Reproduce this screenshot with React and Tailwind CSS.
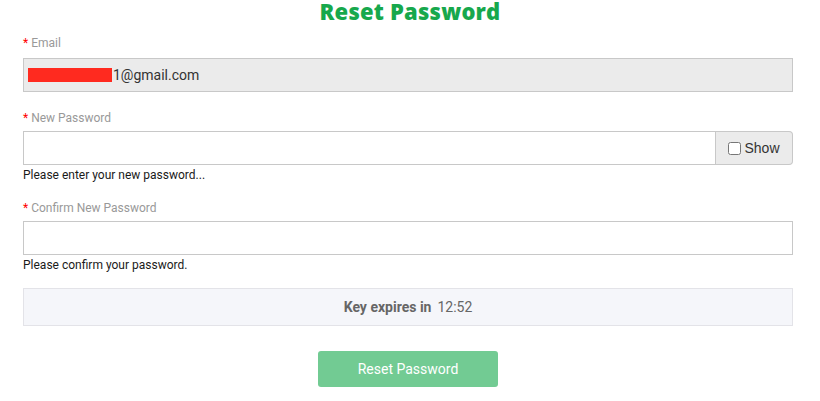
export default function App() {
  return (
    <div className="min-h-screen bg-white px-[23px] font-['Roboto',sans-serif]" style={{ width: 820 }}>
      <h1 className="text-center text-[22px] leading-[22px] font-extrabold text-[#17a84c] font-['Open_Sans',sans-serif] tracking-[0.2px]">
        Reset Password
      </h1>

      <form className="w-[770px]">
        {/* Email */}
        <div className="mt-[14px]">
          <label className="block text-[12px] leading-[14px] text-[#999999]">
            <span className="text-[#ff0000]">*</span> Email
          </label>
          <div className="mt-[8px] h-[34px] border border-[#c8c8c8] bg-[#ebebeb] flex items-center pl-[4px] text-[14px] text-[#333333]">
            <span className="inline-block h-[14px] w-[84px] bg-[#ff2a1f] mr-[1px]"></span>
            1@gmail.com
          </div>
        </div>

        {/* New password */}
        <div className="mt-[19px]">
          <label className="block text-[12px] leading-[14px] text-[#999999]">
            <span className="text-[#ff0000]">*</span> New Password
          </label>
          <div className="mt-[6px] flex h-[34px]">
            <input type="password" className="flex-1 border border-[#c8c8c8] outline-none px-2" />
            <label className="w-[77px] flex items-center justify-center gap-[3px] border border-l-0 border-[#c8c8c8] bg-[#ebebeb] rounded-r-[4px] text-[14px] text-[#333333] font-['Liberation_Sans',sans-serif]">
              <input type="checkbox" className="w-[13px] h-[13px]" />
              Show
            </label>
          </div>
          <p className="text-[12px] leading-[14px] mt-[3px] text-[#1a1a1a]">Please enter your new password...</p>
        </div>

        {/* Confirm */}
        <div className="mt-[19px]">
          <label className="block text-[12px] leading-[14px] text-[#999999]">
            <span className="text-[#ff0000]">*</span> Confirm New Password
          </label>
          <input type="password" className="mt-[6px] block w-full h-[34px] border border-[#c8c8c8] outline-none px-2" />
          <p className="text-[12px] leading-[14px] mt-[3px] text-[#1a1a1a]">Please confirm your password.</p>
        </div>

        {/* Key expires */}
        <div className="mt-[16px] h-[38px] border border-[#e3e3e8] bg-[#f5f6fa] flex items-center justify-center text-[14px] text-[#666666]">
          <span className="font-bold">Key expires in</span>
          <span className="ml-[6px]">12:52</span>
        </div>

        <div className="flex justify-center mt-[25px]">
          <button type="button" className="w-[180px] h-[36px] rounded-[3px] bg-[#72cb93] text-white text-[14px]">
            Reset Password
          </button>
        </div>
      </form>
    </div>
  )
}
